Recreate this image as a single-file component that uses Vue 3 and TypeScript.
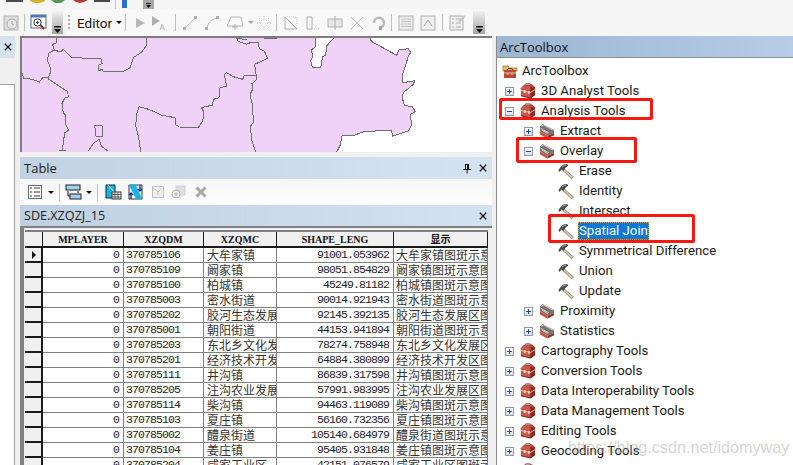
<script setup lang="ts">
interface TreeRow {
  label: string
  level: 'root' | 'top' | 'group' | 'tool'
  expander?: 'plus' | 'minus'
  selected?: boolean
}

interface TableRow {
  code: string
  name: string
  len: string
}

const treeRows: TreeRow[] = [
  { label: 'ArcToolbox', level: 'root' },
  { label: '3D Analyst Tools', level: 'top', expander: 'plus' },
  { label: 'Analysis Tools', level: 'top', expander: 'minus' },
  { label: 'Extract', level: 'group', expander: 'plus' },
  { label: 'Overlay', level: 'group', expander: 'minus' },
  { label: 'Erase', level: 'tool' },
  { label: 'Identity', level: 'tool' },
  { label: 'Intersect', level: 'tool' },
  { label: 'Spatial Join', level: 'tool', selected: true },
  { label: 'Symmetrical Difference', level: 'tool' },
  { label: 'Union', level: 'tool' },
  { label: 'Update', level: 'tool' },
  { label: 'Proximity', level: 'group', expander: 'plus' },
  { label: 'Statistics', level: 'group', expander: 'plus' },
  { label: 'Cartography Tools', level: 'top', expander: 'plus' },
  { label: 'Conversion Tools', level: 'top', expander: 'plus' },
  { label: 'Data Interoperability Tools', level: 'top', expander: 'plus' },
  { label: 'Data Management Tools', level: 'top', expander: 'plus' },
  { label: 'Editing Tools', level: 'top', expander: 'plus' },
  { label: 'Geocoding Tools', level: 'top', expander: 'plus' },
  { label: 'Geostatistical Analyst Tools', level: 'top', expander: 'plus' },
]

const tableRows: TableRow[] = [
  { code: '370785106', name: '大牟家镇', len: '91001.053962' },
  { code: '370785109', name: '阚家镇', len: '98051.854829' },
  { code: '370785100', name: '柏城镇', len: '45249.81182' },
  { code: '370785003', name: '密水街道', len: '90014.921943' },
  { code: '370785202', name: '胶河生态发展区', len: '92145.392135' },
  { code: '370785001', name: '朝阳街道', len: '44153.941894' },
  { code: '370785203', name: '东北乡文化发展区', len: '78274.758948' },
  { code: '370785201', name: '经济技术开发区', len: '64884.380899' },
  { code: '370785111', name: '井沟镇', len: '86839.317598' },
  { code: '370785205', name: '注沟农业发展区', len: '57991.983995' },
  { code: '370785114', name: '柴沟镇', len: '94463.119089' },
  { code: '370785103', name: '夏庄镇', len: '56160.732356' },
  { code: '370785002', name: '醴泉街道', len: '105140.684979' },
  { code: '370785104', name: '姜庄镇', len: '95405.931848' },
  { code: '370785204', name: '咸家工业区', len: '42151.076579' },
]

const iconFor = (row: TreeRow) => {
  if (row.level === 'tool') return '#hammer'
  if (row.level === 'group') return '#box-gray'
  if (row.level === 'root') return '#box-root'
  return '#box-red'
}
</script>

<template>
  <div class="app">
    <svg class="sprite" width="0" height="0">
      <symbol id="box-red" viewBox="0 0 17 16">
        <path d="M1 5 L4 2 L13 1 L16 4 V12 L11 15.5 L1 13 Z" fill="#b8453c" />
        <path d="M1 5 L4 2 L11 3 L11 15.5 L1 13 Z" fill="#c9584a" />
        <path d="M11 4 L16 4 V12 L11 15.5 Z" fill="#8c2a24" />
        <path d="M5 2 L6 0.5 L11 0.5 L12 1.6" fill="none" stroke="#5e2a24" />
        <path d="M1 7.5 L11 9.6 L16 6.6" fill="none" stroke="#ecc0a8" />
        <path d="M4 7 H6 V10 H4 Z M8.6 8 H10.4 V11 H8.6 Z" fill="#f0d4c4" />
        <path d="M1 13 L11 15.5 L16 12" fill="none" stroke="#6e2420" />
      </symbol>
      <symbol id="box-gray" viewBox="0 0 17 16">
        <path d="M1 3 L4 0.6 L16 7 L16 10 L9 13 L1 8 Z" fill="#77726e" />
        <path d="M2.4 3 L5 1.8 L14.6 7 M1.6 5 L10.4 10 M3 7 L9 10.6" fill="none" stroke="#dcd8d4" />
        <path d="M1 8 L9 13 L9 16 L1 11.6 Z" fill="#c9503c" />
        <path d="M9 13 L16 10 L16 12.6 L9 16 Z" fill="#8f2f28" />
      </symbol>
      <symbol id="box-root" viewBox="0 0 16 16">
        <path d="M1 3 L6 3 L7 5 L15 5 L15 8 L1 8 Z" fill="#e4c168" stroke="#9b7d34" stroke-width="0.8" />
        <path d="M2 7 L14 7 L14 15 L2 15 Z" fill="#b84a3a" />
        <path d="M2 10 L14 10 M6 10 L6 12 M10 10 L10 12" fill="none" stroke="#eec2aa" />
        <path d="M5 7 L6 5.6 L10 5.6 L11 7" fill="none" stroke="#6a2c26" />
      </symbol>
      <symbol id="hammer" viewBox="0 0 16 16">
        <path d="M6.4 6.2 L15.4 13.8 L13.6 15.8 L5 7.6 Z" fill="#d8c8ae" stroke="#77726a" stroke-width="0.8" />
        <path d="M0.4 7 L4.6 1.8 L9 1 L10.4 2.4 L8 4.2 L5.4 8 L3.6 6.6 L1.6 9 Z" fill="#4a4c50" />
        <path d="M4 3.6 L8 2" stroke="#9a9ca0" fill="none" />
      </symbol>
      <symbol id="close" viewBox="0 0 10 10">
        <path d="M1 1 L9 9 M9 1 L1 9" stroke="#111" stroke-width="1.6" fill="none" />
      </symbol>
      <symbol id="grip-arrow" viewBox="0 0 7 7">
        <path d="M0 0 H7 V1.4 H0 Z M0 3 H7 L3.5 7 Z" fill="#111" />
      </symbol>
    </svg>

    <header class="top">
      <svg class="strip" width="160" height="9" viewBox="0 0 160 9">
        <rect x="6" y="0" width="17" height="2" fill="#4a4a4a" />
        <path d="M30 0 H45 V1 L40 3 H35 L30 1 Z" fill="#d8b030" />
        <path d="M51 0 H65 L61 3 H55 Z" fill="#4f9a58" />
        <path d="M73 0 H88 L84 2 L80 3 L76 2 Z" fill="#b8392e" />
        <rect x="94" y="0" width="16" height="2" fill="#4a4a4a" />
        <rect x="115" y="0" width="1" height="9" fill="#c8c8c8" />
        <rect x="122" y="0" width="5" height="8" fill="#2d6fc0" />
        <rect x="143" y="0" width="11" height="9" fill="#a8a8a8" />
        <path d="M146 3 H151 V4 H146 Z M146 5 H151 L148.5 8 Z" fill="#111" />
      </svg>

      <div class="tools">
        <div class="tool-left">
          <svg class="ic" width="16" height="16" viewBox="0 0 16 16">
            <rect x="1" y="1" width="14" height="14" fill="#dedede" stroke="#b4b4b4" />
            <circle cx="9" cy="9" r="5" fill="#e8e8e8" stroke="#ababab" />
            <path d="M9 6 V9 L11 10" stroke="#a0a0a0" fill="none" />
          </svg>
          <span class="sep"></span>
          <svg class="ic" width="17" height="17" viewBox="0 0 17 17">
            <rect x="1" y="1" width="15" height="13" fill="#fff" stroke="#5a6a80" />
            <rect x="1" y="1" width="15" height="2.5" fill="#4a78b8" />
            <circle cx="7.5" cy="8.5" r="3.6" fill="#fff" stroke="#333" />
            <path d="M6 8.5 H9 M7.5 7 V10" stroke="#333" fill="none" />
            <path d="M10.5 11 L14 15" stroke="#8a3020" stroke-width="2" />
          </svg>
          <span class="handle"><svg width="7" height="7"><use href="#grip-arrow" /></svg></span>
        </div>

        <div class="editor-bar">
          <span class="dots"></span>
          <span class="editor">Editor</span>
          <span class="caret"></span>
          <span class="sep sep-editor"></span>
          <svg class="ic dim" width="16" height="16" viewBox="0 0 16 16"><path d="M4 3 L13 8 L4 13 Z" fill="#b0b0b0" /></svg>
          <svg class="ic dim pull" width="16" height="16" viewBox="0 0 16 16"><path d="M2 1 L10 6 L2 11 Z" fill="#a8a8a8" /><path d="M10 15 L12 9 L14.6 15 M11 13 H13.6" stroke="#b0b0b0" fill="none" /></svg>
          <span class="sep ml-3"></span>
          <svg class="ic dim" width="16" height="16" viewBox="0 0 16 16"><path d="M3 13 L13 3" stroke="#b8b8b8" /><rect x="1" y="12" width="3" height="3" fill="#a8a8a8" /><rect x="12" y="1" width="3" height="3" fill="#a8a8a8" /></svg>
          <svg class="ic dim" width="16" height="16" viewBox="0 0 16 16"><path d="M3 13 Q4 5 13 3" stroke="#b8b8b8" fill="none" /><rect x="1" y="12" width="3" height="3" fill="#a8a8a8" /><rect x="12" y="1" width="3" height="3" fill="#a8a8a8" /></svg>
          <svg class="ic dim" width="18" height="16" viewBox="0 0 18 16"><path d="M5 2 H15 L17 11 H1 Z" fill="none" stroke="#b0b0b0" /><path d="M9 9 V15 M6 12 H12" stroke="#a8a8a8" /></svg>
          <span class="caret caret-dim"></span>
          <svg class="ic dim pull" width="16" height="16" viewBox="0 0 16 16"><path d="M8 1 V5 M8 11 V15 M1 8 H5 M11 8 H15 M3 3 L6 6 M13 3 L10 6 M3 13 L6 10 M13 13 L10 10" stroke="#bdbdbd" stroke-dasharray="1.5 1" /></svg>
          <span class="sep sep-tight"></span>
          <svg class="ic dim" width="16" height="16" viewBox="0 0 16 16"><path d="M2 2 L14 14 H2 Z" fill="none" stroke="#aaa" /><path d="M2 2 H14 V14" fill="none" stroke="#c8c8c8" stroke-dasharray="1 1" /></svg>
          <svg class="ic dim" width="16" height="16" viewBox="0 0 16 16"><path d="M2 2 H7 V14 H2 Z" fill="none" stroke="#aaa" /><path d="M7 8 L14 14 M7 14 H15" stroke="#c0c0c0" stroke-dasharray="1 1" /></svg>
          <svg class="ic dim" width="16" height="16" viewBox="0 0 16 16"><rect x="1" y="4" width="14" height="8" fill="#e6e6e6" stroke="#aaa" /><path d="M8 1 V15" stroke="#aaa" /></svg>
          <svg class="ic dim" width="16" height="16" viewBox="0 0 16 16"><path d="M2 14 L14 2 M2 2 L14 14" stroke="#b8b8b8" /></svg>
          <svg class="ic dim" width="16" height="16" viewBox="0 0 16 16"><path d="M3 8 A5 5 0 1 1 10 12.4" fill="none" stroke="#b4b4b4" stroke-width="2.4" /><rect x="8" y="11" width="3" height="4" fill="#999" /></svg>
          <span class="sep sep-tight"></span>
          <svg class="ic dim" width="16" height="16" viewBox="0 0 16 16"><rect x="1" y="1" width="14" height="14" fill="#eee" stroke="#aaa" /><path d="M3 4 H13 M3 6.5 H13 M3 9 H13 M3 11.5 H13" stroke="#bbb" /></svg>
          <svg class="ic dim" width="16" height="16" viewBox="0 0 16 16"><rect x="1" y="1" width="14" height="14" fill="#eee" stroke="#aaa" /><path d="M4 11 L8 5 L12 11" fill="none" stroke="#999" /></svg>
          <span class="sep"></span>
          <svg class="ic dim" width="17" height="16" viewBox="0 0 17 16"><rect x="1" y="1" width="13" height="14" fill="#eee" stroke="#aaa" /><path d="M3 4 H5 M7 4 H12 M3 8 H5 M7 8 H12 M3 12 H5 M7 12 H12" stroke="#aaa" /><path d="M16 1 L10 7" stroke="#c4c4c4" stroke-width="2" /></svg>
          <span class="handle handle-end"><svg width="7" height="7"><use href="#grip-arrow" /></svg></span>
        </div>
      </div>
    </header>

    <main class="body">
      <aside class="side">
        <div class="side-head"><svg width="8" height="8"><use href="#close" /></svg></div>
        <div class="side-gap"></div>
        <div class="side-list"></div>
      </aside>

      <section class="center">
        <div class="map">
          <svg class="map-svg" viewBox="0 0 1416 348" preserveAspectRatio="xMinYMin slice">
            <path class="land" d="M0 0 L886 0 L886 32 L874 42 L878 60 L872 75 L877 95 L902 95 L908 62 L917 58 L920 30 L946 0 L1048 0 L1054 16 L1130 58 L1136 42 L1165 38 L1172 50 L1164 62 L1158 85 L1148 115 L1148 140 L1184 134 L1180 145 L1150 170 L1146 182 L1153 208 L1178 213 L1186 228 L1172 235 L1174 268 L1165 285 L1118 300 L1114 283 L1066 285 L1032 287 L1004 297 L985 297 L965 300 L962 325 L950 348 L0 348 Z" />
            <path class="edge" d="M110 0 L108 22 L97 25 L103 42 L86 52 L82 75 L88 85 L93 105 L84 128 L143 167 L145 183 L135 185 L126 203 L130 230 L136 237 L137 265 L146 283 L134 290 L127 342" />
            <path class="edge" d="M8 112 L10 127 L38 130 L58 138 L68 125 L84 125" />
            <path class="edge" d="M103 42 L122 48 L130 40 L155 65 L243 68 L246 82 L234 88 L234 105 L247 100 L250 108 L314 105 L330 95 L340 65 L365 48 L378 30 L380 0" />
            <path class="edge" d="M650 6 L655 16 L680 25 L695 18 L715 20 L718 38 L733 45 L743 67 L704 85 L708 115 L710 130 L696 143 L698 160 L690 175 L698 210 L700 260 L692 270 L694 310 L707 348" />
            <path class="edge" d="M710 118 L672 120 L668 130 L640 122 L620 110 L613 115 L620 150 L600 155 L597 185 L580 190 L578 207 L545 215 L552 230 L548 255 L535 275 L478 273 L467 266 L465 245 L422 237 L405 228 L380 218 L357 212 L350 235 L347 270 L356 305 L362 348" />
            <path class="edge" d="M224 268 L246 270 L248 300 L228 300 Z" />
            <path class="edge" d="M205 345 L220 322 L238 310 L244 330 L264 345" />
            <path class="edge" d="M118 342 L138 342 M650 6 L680 12 M733 9 L770 6" />
          </svg>
        </div>

        <div class="table-win">
          <div class="bar bar-title">
            <span>Table</span>
            <span class="bar-actions">
              <svg width="10" height="11" viewBox="0 0 10 11"><path d="M3 1 H7 V6 H9 V7 H5.6 V10.6 H4.6 V7 H1 V6 H3 Z M4 2 V6 H5 V2 Z" fill="#111" /></svg>
              <svg width="8" height="8"><use href="#close" /></svg>
            </span>
          </div>
          <div class="table-tools">
            <svg width="14" height="14" viewBox="0 0 14 14"><rect x="0.5" y="0.5" width="13" height="13" fill="#fff" stroke="#5a6a80" /><path d="M2 3 H4 M6 3 H12 M2 7 H4 M6 7 H12 M2 11 H4 M6 11 H12" stroke="#333" /></svg>
            <span class="caret caret-a"></span>
            <span class="sep"></span>
            <svg width="17" height="16" viewBox="0 0 17 16"><rect x="1" y="1" width="14" height="5" fill="#9fd0f0" stroke="#222" /><rect x="5" y="10" width="11" height="5" fill="#9fd0f0" stroke="#222" /><path d="M3 7 V12 H5 M13 7 V9" stroke="#111" fill="none" /></svg>
            <span class="caret caret-b"></span>
            <span class="sep"></span>
            <svg class="ml-2" width="17" height="16" viewBox="0 0 17 16"><path d="M1 1 H10 V14 H1 Z" fill="#15b5e6" stroke="#222" /><path d="M3 1 L10 9" stroke="#fff" /><rect x="7" y="8" width="9" height="7" fill="#fff" stroke="#333" /><path d="M7 10.5 H16 M7 13 H16 M10 8 V15 M13 8 V15" stroke="#555" /></svg>
            <svg width="17" height="16" viewBox="0 0 17 16"><path d="M2 1 H15 V15 H2 Z" fill="#fff" stroke="#333" /><path d="M2 1 L9 1 L15 15 L9 15 Z" fill="#15b5e6" /><path d="M4 15 V9 M2 11 L4 9 L6 11" stroke="#113a80" stroke-width="1.4" fill="none" /><path d="M13 1 V7 M11 5 L13 7 L15 5" stroke="#113a80" stroke-width="1.4" fill="none" /></svg>
            <svg class="dim ml-3" width="12" height="12" viewBox="0 0 12 12"><rect x="0.5" y="0.5" width="11" height="11" fill="#eee" stroke="#bbb" /><path d="M3 3 L6 6 L9 3 M6 6 V9" stroke="#bbb" fill="none" /></svg>
            <svg class="dim ml-2" width="15" height="15" viewBox="0 0 15 15"><rect x="5" y="1" width="9" height="9" fill="#ddd" stroke="#ccc" /><circle cx="5" cy="9" r="4" fill="#f4f4f4" stroke="#aaa" /><path d="M3 9 H7 M5 7 V11" stroke="#aaa" /></svg>
            <svg class="ml-4" width="12" height="12" viewBox="0 0 12 12"><path d="M1.5 1.5 L10.5 10.5 M10.5 1.5 L1.5 10.5" stroke="#a9a9a9" stroke-width="3" /></svg>
          </div>
          <div class="bar bar-sub">
            <span class="sub-name">SDE.XZQZJ_15</span>
            <span class="bar-actions"><svg width="8" height="8"><use href="#close" /></svg></span>
          </div>

          <div class="grid-wrap">
            <table class="grid">
              <colgroup>
                <col class="c0" /><col class="c1" /><col class="c2" /><col class="c3" /><col class="c4" /><col class="c5" />
              </colgroup>
              <thead>
                <tr>
                  <th></th>
                  <th>MPLAYER</th>
                  <th>XZQDM</th>
                  <th>XZQMC</th>
                  <th>SHAPE_LENG</th>
                  <th>显示</th>
                </tr>
              </thead>
              <tbody>
                <tr v-for="(row, i) in tableRows" :key="row.code">
                  <td class="selector"><span v-if="i === 0" class="pointer"></span></td>
                  <td class="num">0</td>
                  <td class="code">{{ row.code }}</td>
                  <td class="txt">{{ row.name }}</td>
                  <td class="num">{{ row.len }}</td>
                  <td class="txt last">{{ row.name }}图斑示意图</td>
                </tr>
              </tbody>
            </table>
          </div>
        </div>
      </section>

      <section class="toolbox">
        <div class="toolbox-title">ArcToolbox</div>
        <ul class="tree">
          <li v-for="row in treeRows" :key="row.label" class="node" :class="`lv-${row.level}`">
            <span v-if="row.expander" class="exp" :class="row.expander"></span>
            <svg class="node-icon" width="16" height="16"><use :href="iconFor(row)" /></svg>
            <span class="node-label" :class="{ selected: row.selected }">{{ row.label }}</span>
          </li>
        </ul>
      </section>
    </main>

    <!-- 标注和水印 -->
    <span class="mark mark-analysis"></span>
    <span class="mark mark-overlay"></span>
    <span class="mark mark-join"></span>
    <span class="watermark">https://blog.csdn.net/idomyway</span>
  </div>
</template>

<style>
html,
body {
  margin: 0;
  background: #f0f0f0;
}
</style>

<style scoped>
.app {
  position: relative;
  display: flex;
  flex-direction: column;
  width: 793px;
  height: 465px;
  overflow: hidden;
  background: #f0f0f0;
  font-family: "Open Sans", "Noto Sans", sans-serif;
  color: #111;
}

.sprite {
  display: none;
}

/* ========== 顶部工具条 ========== */
.top {
  flex: none;
  height: 36px;
  background: #f5f5f5;
}

.strip {
  display: block;
}

.tools {
  display: flex;
  height: 27px;
}

.tool-left {
  display: flex;
  align-items: center;
  width: 66px;
  padding-left: 3px;
  box-sizing: border-box;
  gap: 5px;
}

.ic {
  flex: none;
}

.dim {
  opacity: 0.9;
}

.pull { margin-left: -4px; }
.ml-2 { margin-left: 2px; }
.ml-3 { margin-left: 3px; }
.ml-4 { margin-left: 4px; }

.sep {
  flex: none;
  width: 1px;
  height: 17px;
  background: #bdbdbd;
}

.sep-editor {
  margin-left: -3px;
}

.sep-tight {
  margin-left: -2px;
}

.handle {
  display: flex;
  flex: none;
  align-items: flex-end;
  justify-content: center;
  width: 11px;
  height: 23px;
  padding-bottom: 1px;
  box-sizing: border-box;
  background: linear-gradient(#f0f0f0, #a6a6a6);
}

.handle-end {
  width: 12px;
  margin-left: auto;
}

.editor-bar {
  display: flex;
  align-items: center;
  gap: 6px;
  width: 419px;
  padding-left: 2px;
  box-sizing: border-box;
  background: #f8f8f8;
}

.dots {
  flex: none;
  width: 2px;
  height: 16px;
  background: repeating-linear-gradient(#b0b0b0 0 2px, transparent 2px 4px);
}

.editor {
  margin-left: 1px;
  font-family: Roboto, sans-serif;
  font-size: 13.5px;
  line-height: 20px;
  color: #1c1408;
}

.caret {
  flex: none;
  width: 0;
  height: 0;
  margin-left: -2px;
  border-top: 3px solid #111;
  border-right: 3px solid transparent;
  border-left: 3px solid transparent;
}

.caret-dim {
  border-top-color: #aaa;
}

/* ========== 主体 ========== */
.body {
  display: flex;
  flex: 1;
  min-height: 0;
}

.side {
  display: flex;
  flex: none;
  flex-direction: column;
  width: 15px;
  margin-right: 5px;
}

.side-head {
  display: flex;
  flex: none;
  align-items: center;
  justify-content: center;
  height: 22px;
  background: #d6e4f2;
}

.side-gap {
  flex: none;
  height: 26px;
}

.side-list {
  flex: 1;
  border-top: 1px solid #a0a0a0;
  border-right: 1px solid #a0a0a0;
  background: #fff;
}

.center {
  flex: none;
  width: 472px;
}

/* ========== 地图 ========== */
.map {
  height: 116px;
  overflow: hidden;
  border-top: 2px solid #7d7d7d;
  border-left: 2px solid #7d7d7d;
  box-sizing: border-box;
  background: #fff;
}

.map-svg {
  display: block;
  width: 472px;
  height: 116px;
  margin: -2px 0 0 -2px;
  shape-rendering: crispEdges;
}

.land {
  fill: #f0d2f8;
  stroke: #6e6e6e;
  stroke-width: 1;
  vector-effect: non-scaling-stroke;
}

.edge {
  fill: none;
  stroke: #6e6e6e;
  stroke-width: 1;
  vector-effect: non-scaling-stroke;
}

/* ========== 属性表 ========== */
.table-win {
  margin-top: 5px;
}

.bar {
  display: flex;
  align-items: center;
  justify-content: space-between;
  padding: 0 5px 0 4px;
  font-size: 13px;
  color: #222;
}

.bar-title {
  height: 22px;
  background: linear-gradient(90deg, #c2d2e3, #d5e3f1);
}

.bar-sub {
  height: 23px;
  background: linear-gradient(90deg, #bfd0e2, #d3e2f0);
  border-bottom: 2px solid #808080;
  box-sizing: border-box;
}

.sub-name {
  font-size: 12.6px;
}

.bar-actions {
  display: flex;
  align-items: center;
  gap: 7px;
}

.table-tools {
  display: flex;
  align-items: center;
  gap: 5px;
  height: 26px;
  padding-left: 8px;
  box-sizing: border-box;
  background: linear-gradient(#f6f6f6, #fdfdfd);
}

.caret-a {
  margin-left: 1px;
}

.caret-b {
  margin-left: -1px;
}

.grid-wrap {
  height: 237px;
  overflow: hidden;
  padding: 2px 4px 0 5px;
  box-sizing: border-box;
  background: #f0f0f0;
  box-shadow: inset 4px 0 0 #808080;
}

.grid {
  width: 463px;
  table-layout: fixed;
  border-collapse: separate;
  border-spacing: 0;
  background: #fff;
  border-top: 2px solid #808080;
  box-sizing: border-box;
}

.c0 { width: 18px; }
.c1 { width: 81px; }
.c2 { width: 80px; }
.c3 { width: 73px; }
.c4 { width: 117px; }
.c5 { width: 94px; }

.grid th {
  height: 16px;
  padding: 0;
  overflow: hidden;
  border-right: 1px solid #1a1a1a;
  border-bottom: 2px solid #1a1a1a;
  box-sizing: border-box;
  background: #f0f0f0;
  font-family: "Liberation Serif", "Noto Sans CJK SC", serif;
  font-size: 10px;
  font-weight: 700;
  line-height: 13px;
  text-align: center;
  white-space: nowrap;
}

.grid td {
  height: 15px;
  padding: 0;
  overflow: hidden;
  border-right: 1px solid #808080;
  border-bottom: 1px solid #808080;
  box-sizing: border-box;
  font-family: "Liberation Mono", "Noto Sans CJK SC", monospace;
  font-size: 11.5px;
  letter-spacing: -0.9px;
  line-height: 14px;
  color: #222;
  white-space: nowrap;
}

.grid .num {
  padding-right: 4px;
  text-align: right;
}

.grid .code {
  padding-left: 2px;
}

.grid .txt {
  padding-left: 3px;
  font-family: "Noto Sans CJK SC", sans-serif;
  font-size: 12px;
  letter-spacing: 0;
  color: #333;
}

.grid .last {
  padding-left: 2px;
}

.grid .selector {
  position: relative;
  border-right: 2px solid #1a1a1a;
  border-bottom: 2px solid #1a1a1a;
  background: #f0f0f0;
}

.pointer {
  display: block;
  width: 0;
  height: 0;
  margin-left: 7px;
  border-top: 4px solid transparent;
  border-bottom: 4px solid transparent;
  border-left: 4px solid #111;
}

/* ========== 工具箱树 ========== */
.toolbox {
  flex: 1;
  min-width: 0;
  margin-left: 4px;
  border-left: 1px solid #8c8c8c;
  background: #fff;
}

.toolbox-title {
  display: flex;
  align-items: center;
  height: 22px;
  padding-left: 3px;
  border-bottom: 1px solid #8f8f8f;
  box-sizing: border-box;
  background: linear-gradient(90deg, #9cb6d3, #b5cde6);
  font-size: 13px;
  color: #111;
}

.tree {
  margin: 0;
  padding: 3px 0 0;
  list-style: none;
}

.node {
  display: flex;
  align-items: center;
  height: 20px;
  font-family: Roboto, sans-serif;
  font-size: 13.2px;
  color: #1a1a1a;
  white-space: nowrap;
}

.lv-root { padding-left: 5px; }
.lv-top { padding-left: 8px; }
.lv-group { padding-left: 27px; }
.lv-tool { padding-left: 61px; }

.exp {
  position: relative;
  flex: none;
  width: 9px;
  height: 9px;
  margin-right: 6px;
  border: 1px solid #8f9bab;
  box-sizing: border-box;
  background: linear-gradient(#fff, #dcdfe4);
}

.exp::before {
  content: "";
  position: absolute;
  top: 3px;
  left: 1px;
  width: 5px;
  height: 1px;
  background: #2b4c86;
}

.exp.plus::after {
  content: "";
  position: absolute;
  top: 1px;
  left: 3px;
  width: 1px;
  height: 5px;
  background: #2b4c86;
}

.node-icon {
  flex: none;
  margin-right: 4px;
}

.lv-root .node-icon {
  margin-right: 3px;
}

.node-label {
  padding: 0 1px;
  line-height: 18px;
}

.node-label.selected {
  outline: 1px dotted #d89a20;
  outline-offset: -1px;
  background: #0c78d8;
  color: #fff;
}

/* ========== 标注 ========== */
.mark {
  position: absolute;
  border: 3px solid #f5190f;
  border-radius: 2px;
  box-sizing: border-box;
  pointer-events: none;
}

.mark-analysis {
  top: 98px;
  left: 499px;
  width: 154px;
  height: 22px;
}

.mark-overlay {
  top: 137px;
  left: 516px;
  width: 121px;
  height: 26px;
}

.mark-join {
  top: 214px;
  left: 548px;
  width: 147px;
  height: 29px;
}

.watermark {
  position: absolute;
  top: 438px;
  left: 568px;
  font-family: "Liberation Sans", sans-serif;
  font-size: 16.2px;
  color: rgba(170, 170, 170, 0.5);
  white-space: nowrap;
}
</style>
